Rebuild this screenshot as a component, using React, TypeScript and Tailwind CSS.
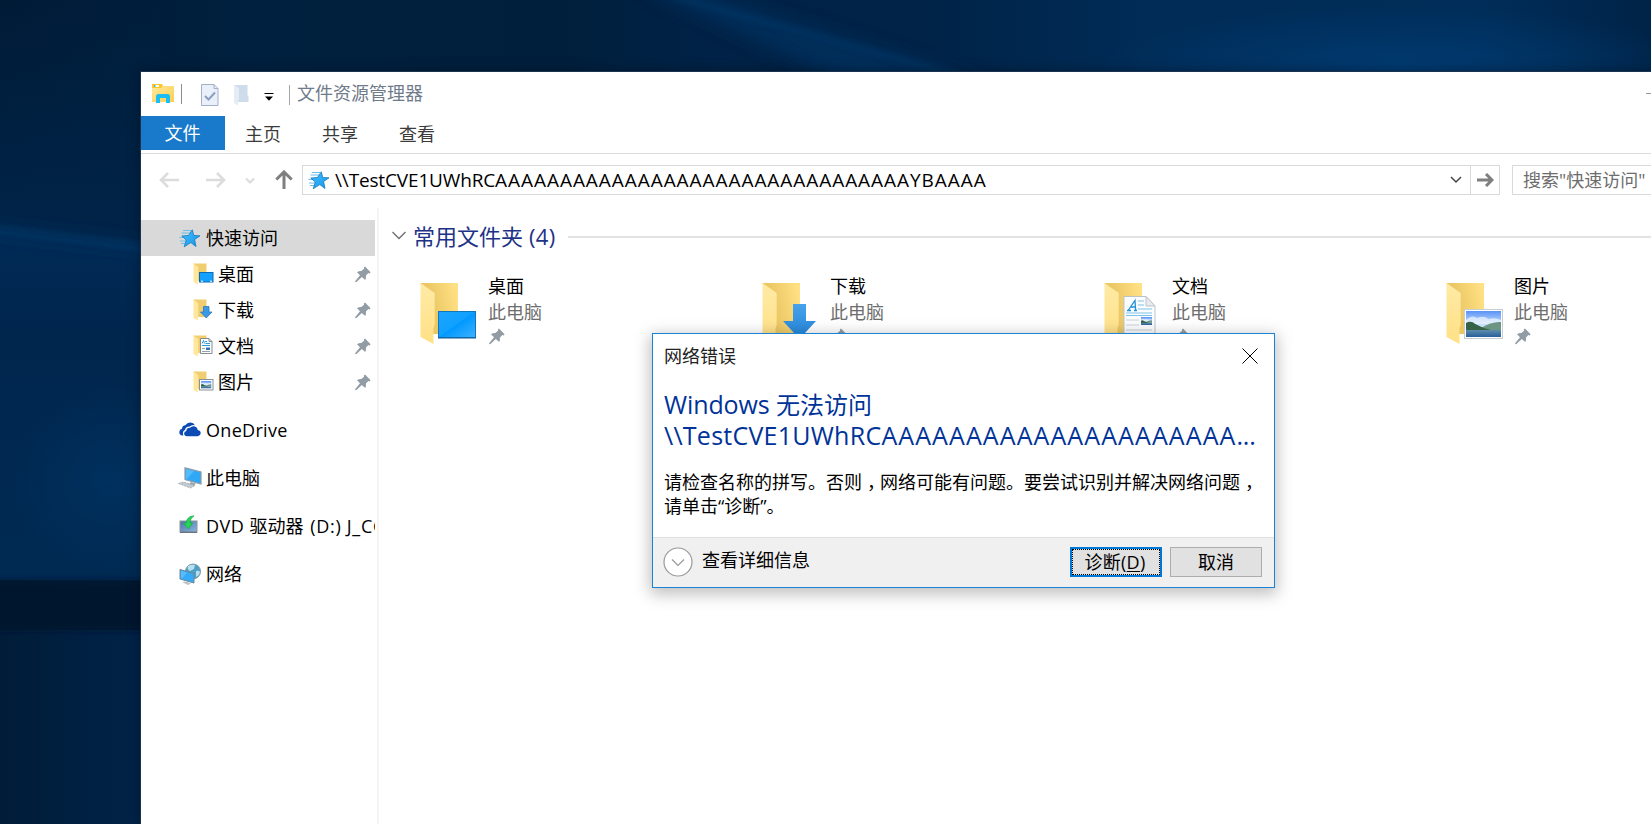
import type { ReactNode } from "react";

type Kind = "desktop" | "download" | "document" | "picture";

const FOLDERS: { name: string; kind: Kind }[] = [
  { name: "桌面", kind: "desktop" },
  { name: "下载", kind: "download" },
  { name: "文档", kind: "document" },
  { name: "图片", kind: "picture" },
];

function Wallpaper() {
  return (
    <svg className="absolute inset-0 h-full w-full" viewBox="0 0 1651 824" preserveAspectRatio="none">
      <defs>
        <linearGradient id="wTop" x1="0" x2="1" y1="0" y2="0">
          <stop offset="0" stopColor="#001b36" />
          <stop offset=".15" stopColor="#00203f" />
          <stop offset=".34" stopColor="#001f3c" />
          <stop offset=".42" stopColor="#002246" />
          <stop offset=".56" stopColor="#002347" />
          <stop offset=".7" stopColor="#002c57" />
          <stop offset=".9" stopColor="#002d59" />
          <stop offset="1" stopColor="#002347" />
        </linearGradient>
        <linearGradient id="wSide" x1="0" x2="0" y1="0" y2="1">
          <stop offset="0" stopColor="#002347" stopOpacity="0" />
          <stop offset=".8" stopColor="#002347" />
        </linearGradient>
        <linearGradient id="wLeft" x1="0" x2="0" y1="0" y2="1">
          <stop offset="0" stopColor="#002a55" />
          <stop offset=".3" stopColor="#00264e" />
          <stop offset="1" stopColor="#002a52" />
        </linearGradient>
        <linearGradient id="wLow" x1="0" x2="1" y1="0" y2="0">
          <stop offset="0" stopColor="#001c38" />
          <stop offset="1" stopColor="#00244a" />
        </linearGradient>
        <radialGradient id="wGlow">
          <stop offset="0" stopColor="#003a70" />
          <stop offset="1" stopColor="#003a70" stopOpacity="0" />
        </radialGradient>
        <filter id="wBlur" x="-20%" y="-20%" width="140%" height="140%">
          <feGaussianBlur stdDeviation="3" />
        </filter>
        <filter id="wBlurBig" x="-50%" y="-50%" width="200%" height="200%">
          <feGaussianBlur stdDeviation="9" />
        </filter>
      </defs>
      <rect width="1651" height="824" fill="url(#wTop)" />
      <ellipse cx="1400" cy="66" rx="300" ry="60" fill="url(#wGlow)" />
      <path d="M640 -14H680L990 84H850Z" fill="#003360" opacity=".75" filter="url(#wBlurBig)" />
      <path d="M672 -4L960 76" stroke="#003c70" strokeWidth="4" opacity=".6" filter="url(#wBlur)" />
      <rect width="160" height="260" fill="url(#wSide)" />
      <path d="M0 231L145 248V580H0Z" fill="url(#wLeft)" />
      <path d="M-20 227L165 249" stroke="#003869" strokeWidth="4" filter="url(#wBlurBig)" />
      <path d="M-20 227L165 249" stroke="#003869" strokeWidth="4" filter="url(#wBlur)" />
      <ellipse cx="110" cy="480" rx="100" ry="95" fill="url(#wGlow)" opacity=".45" />
      <rect y="630" width="160" height="194" fill="url(#wLow)" />
      <rect x="-10" y="581" width="170" height="49" fill="#00172f" filter="url(#wBlur)" />
    </svg>
  );
}

function FolderShape() {
  return (
    <>
      <defs>
        <linearGradient id="fBack" x1="0" x2="1" y1=".6" y2=".3">
          <stop offset=".3" stopColor="#ebc765" />
          <stop offset="1" stopColor="#ffe083" />
        </linearGradient>
        <linearGradient id="fFront" x1="0" x2="0" y1="0" y2="1">
          <stop offset="0" stopColor="#ffeaa6" />
          <stop offset="1" stopColor="#ffe085" />
        </linearGradient>
      </defs>
      <path d="M1.500 1H39V52H14Z" fill="url(#fBack)" />
      <path d="M1.500 1L15.700 11V43L14.500 46V62L1.500 55Z" fill="url(#fFront)" />
    </>
  );
}

function PhotoScene({ x, y, w, h }: { x: number; y: number; w: number; h: number }) {
  return (
    <svg x={x} y={y} width={w} height={h} viewBox="0 0 34 26" preserveAspectRatio="none">
      <defs>
        <linearGradient id="sky" x1="0" x2="0" y1="0" y2="1">
          <stop offset="0" stopColor="#5a93f5" />
          <stop offset=".6" stopColor="#d5ebff" />
        </linearGradient>
        <linearGradient id="sea" x1="0" x2="0" y1="0" y2="1">
          <stop offset="0" stopColor="#5f8dab" />
          <stop offset="1" stopColor="#285f9c" />
        </linearGradient>
      </defs>
      <rect width="34" height="26" fill="url(#sky)" />
      <path d="M0 9Q6 3 11 7Q17 4 22 8Q28 6 34 9V13H0Z" fill="#fff" opacity=".6" />
      <path d="M14 17Q26 10 34 11V19H14Z" fill="#6c9583" />
      <path d="M0 12Q5 9 9 13Q16 17 24 19V20H0Z" fill="#356347" />
      <rect y="19" width="34" height="7" fill="url(#sea)" />
    </svg>
  );
}

function BigFolder({ kind }: { kind: Kind }) {
  return (
    <svg width="60" height="64" viewBox="0 0 60 64" className="shrink-0">
      <defs>
        <linearGradient id="scr" x1="0" x2="1" y1="0" y2="1">
          <stop offset="0" stopColor="#1ba6ff" />
          <stop offset=".49" stopColor="#10a0ff" />
          <stop offset=".5" stopColor="#0098ff" />
          <stop offset="1" stopColor="#3fb2ff" />
        </linearGradient>
        <linearGradient id="arr" x1="0" x2="0" y1="0" y2="1">
          <stop offset="0" stopColor="#47a2ea" />
          <stop offset="1" stopColor="#2283d8" />
        </linearGradient>
      </defs>
      <FolderShape />
      {kind === "desktop" && (
        <>
          <rect x="19.500" y="29.500" width="37" height="26" fill="url(#scr)" stroke="#1376b8" />
          <path d="M19 56H57" stroke="#0e5c95" strokeWidth="1" />
        </>
      )}
      {kind === "download" && <path d="M32 22H45V39H55L38.500 57L22 39H32Z" fill="url(#arr)" />}
      {kind === "document" && (
        <>
          <path d="M21 14.500H43L52 24V62H21Z" fill="#fbfcfd" stroke="#bcc3c8" />
          <path d="M43 14.500V24H52Z" fill="#e8ecef" stroke="#bcc3c8" />
          <path d="M35 19H41M35 23H41M35 27H49M23 31H49M23 33.500H49" stroke="#7cc2ea" strokeWidth="1.200" />
          <path d="M23 38H36M23 43H36M23 48H49M23 53H49" stroke="#cbd2d6" strokeWidth="1.200" />
          <path d="M24 28.500H28M31 28.500H34M25.500 28L32 18.500L32.600 28M28 25H32.300" fill="none" stroke="#1f93d6" strokeWidth="1.300" />
          <PhotoScene x={38} y={35} w={11} h={8} />
        </>
      )}
      {kind === "picture" && (
        <>
          <rect x="19.500" y="27.500" width="38" height="29" fill="#fff" stroke="#c9ced3" />
          <PhotoScene x={21} y={29} w={35} h={26} />
        </>
      )}
    </svg>
  );
}

function SmallFolder({ kind }: { kind: Kind }) {
  return (
    <svg width="21" height="22" viewBox="0 0 21 22" className="shrink-0">
      <path d="M.5 .5H13.500V18H5Z" fill="#f0ce70" />
      <path d="M.5 .5L5.300 4V15.500L4.800 16.500V21.500L.5 19Z" fill="#ffe79b" />
      {kind === "desktop" && (
        <>
          <rect x="6.500" y="9.500" width="13.500" height="9.500" fill="#14a0ff" stroke="#0b6db2" />
          <path d="M8 18.200H10M17 18.200H19" stroke="#fff" />
        </>
      )}
      {kind === "download" && <path d="M10.500 7.500H16V13H19L13.300 19L7.500 13H10.500Z" fill="#3b9ae6" stroke="#2a79bd" strokeWidth=".8" />}
      {kind === "document" && (
        <>
          <path d="M7.500 3.500H16L19 6.500V18.500H7.500Z" fill="#fff" stroke="#858b90" />
          <path d="M16 3.500V6.500H19" fill="none" stroke="#858b90" />
          <path d="M12 6.500H14M12.500 8.500H17M9 10.500H17M9 8.500L10.500 5.500L11.500 8.500" fill="none" stroke="#2a9bdc" />
          <path d="M9 13.500H12M9 16.500H17" stroke="#9aa0a5" />
          <rect x="13" y="12.500" width="4" height="2.500" fill="#2e75b5" />
        </>
      )}
      {kind === "picture" && (
        <>
          <rect x="6.500" y="8.500" width="13.500" height="10.500" fill="#fff" stroke="#8c9296" />
          <PhotoScene x={8} y={10} w={10.5} h={7.5} />
        </>
      )}
    </svg>
  );
}

function Pin() {
  return (
    <svg width="16" height="17" viewBox="0 0 16 17" className="shrink-0" fill="#929ca4">
      <path d="M10 .5L15.600 6.300L14.600 7.400L13.300 7L10.800 9.800Q11.500 12.200 10.200 13.900L6.800 11L1.500 16L.2 16.300L.3 15L5 9.200L2 6.300Q4 4.800 6.300 5L9.100 2.800L8.900 1.600Z" />
    </svg>
  );
}

function StarIcon() {
  return (
    <svg width="22" height="19" viewBox="0 0 22 19" className="shrink-0">
      <defs>
        <linearGradient id="st" x1="0" x2="1" y1="0" y2="1">
          <stop offset="0" stopColor="#3fc0ff" />
          <stop offset="1" stopColor="#1a94ea" />
        </linearGradient>
      </defs>
      <path d="M4 1.500H12M2.500 4H11M.5 8.500H6M1 12H8M2 14.500H7" stroke="#6cbdea" strokeWidth="1" />
      <path d="M13.300 .8L14.700 6.500L21 6.800L15.600 10.500L17 17.500L11.800 13.600L5.200 17.800L7.300 11L2.800 7L9.500 6.500Z" fill="url(#st)" stroke="#1479bd" strokeWidth=".8" strokeLinejoin="round" />
    </svg>
  );
}

function OneDriveIcon() {
  return (
    <svg width="22" height="15" viewBox="0 0 22 15" className="-mt-0.5 shrink-0" fill="#0b4bb3">
      <path d="M4.300 13.500H3.500Q.3 13.200 .3 10Q.4 7.400 3 6.800Q3.200 3.500 6.300 3.300Q8.200 .3 11.500 .4Q14.700 .7 16 3.200Q12.600 2.600 10.600 4.600Q6.500 4.800 6 8.100Q3 9.500 4.300 13.500Z" />
      <path d="M8 14.300Q5 14 5.100 11.300Q5.500 9.200 7.300 9Q7.500 5.800 11 5.800Q12.800 4 15 4.300Q18.300 4.800 18.700 8Q21.700 8.500 21.700 11.300Q21.500 14 18.800 14.300Z" />
    </svg>
  );
}

function PcIcon() {
  return (
    <svg width="24" height="22" viewBox="0 0 24 22" className="-ml-px shrink-0">
      <path d="M7 .8L23 5V17L7 12.500Z" fill="#2fa8f7" stroke="#8b9ba7" strokeWidth="1.200" />
      <path d="M8 2L16 4L9 12L8 11.700Z" fill="#6cc6ff" opacity=".6" />
      <path d="M13 15L18 16.500L16 18.500L11 17Z" fill="#9aa6ae" />
      <path d="M.5 16.500L5 15L17 18.500L12.500 21Z" fill="#c3cacf" stroke="#9aa4ab" strokeWidth=".8" strokeDasharray="2 1" />
    </svg>
  );
}

function DvdIcon() {
  return (
    <svg width="19" height="18" viewBox="0 0 19 18" className="-mt-1 shrink-0">
      <defs>
        <linearGradient id="dv" x1="0" x2="1" y1="0" y2="1">
          <stop offset="0" stopColor="#4b76a8" />
          <stop offset="1" stopColor="#8ab4dd" />
        </linearGradient>
      </defs>
      <rect x="1" y="6" width="17" height="11" fill="url(#dv)" stroke="#8a949d" />
      <path d="M1 17.300H18" stroke="#555f68" />
      <path d="M15 .8Q8 1 7.200 8H4.500L9.500 14L13.500 8H11Q11 3.500 15 .8Z" fill="#25d558" stroke="#0fa23b" strokeWidth=".6" />
    </svg>
  );
}

function NetworkIcon() {
  return (
    <svg width="23" height="23" viewBox="0 0 23 23" className="shrink-0">
      <circle cx="14" cy="8.500" r="7.500" fill="#4f9fc4" stroke="#7f9aa8" />
      <path d="M9 3Q13 1 16 2L15 6L11 8Q8 7 9 3ZM17 8Q20 7 21 9Q20 13 17 14Z" fill="#b5e0ee" />
      <path d="M1 6.500L15 10.500V20L1 16Z" fill="#35aaf8" stroke="#6e8796" />
      <path d="M2 8L8 9.500L3 15.500L2 15Z" fill="#7dcdff" opacity=".5" />
      <path d="M3 19L7 18.500L12 20.500L9 22Z" fill="#b9c2c8" />
    </svg>
  );
}

function ExplorerIcon() {
  return (
    <svg width="22" height="20" viewBox="0 0 22 20" className="shrink-0">
      <defs>
        <linearGradient id="ex" x1="0" x2="1" y1="0" y2="1">
          <stop offset="0" stopColor="#ffe89c" />
          <stop offset="1" stopColor="#fbd04f" />
        </linearGradient>
      </defs>
      <path d="M0 0H10L11 2L10 4H0Z" fill="#fcc727" />
      <path d="M2 1H7V3H2Z" fill="#fff" />
      <path d="M2 1H3.500V3H2Z" fill="#3fb8d8" />
      <path d="M0 4H9L11 2H22V18H0Z" fill="url(#ex)" />
      <path d="M4 19V12.500Q4 10 6.500 10H15.500Q18 10 18 12.500V19H14V14H8V19Z" fill="#1bbdf5" />
    </svg>
  );
}

function SideRow({ icon, children, indent, pinned, selected }: { icon: ReactNode; children: ReactNode; indent?: boolean; pinned?: boolean; selected?: boolean }) {
  return (
    <div className={`flex h-9 w-[234px] items-center overflow-hidden ${indent ? "pl-[52px]" : "pl-[38px]"} ${selected ? "bg-[#d9d9d9]" : ""}`}>
      <span className={`flex shrink-0 items-center ${indent ? "w-[25px]" : "w-[27px]"}`}>{icon}</span>
      <span className="whitespace-nowrap">{children}</span>
      {pinned && (
        <span className="mr-1 ml-auto">
          <Pin />
        </span>
      )}
    </div>
  );
}

function Comma() {
  return <span className="pl-[5px] tracking-[-5px]">，</span>;
}

function NetworkErrorDialog() {
  return (
    <div className="absolute top-[333px] left-[652px] flex h-[255px] w-[623px] flex-col border border-[#1883d7] bg-white text-black shadow-[0_4px_15px_2px_rgba(0,0,0,0.26)]">
      <div className="flex h-[43px] items-center justify-between pr-4 pl-[11px] text-[#222]">
        <span>网络错误</span>
        <svg width="16" height="16" viewBox="0 0 16 16" stroke="#000" strokeWidth="1">
          <path d="M.5 .5L15.500 15.500M15.500 .5L.5 15.500" />
        </svg>
      </div>
      <div className="flex grow flex-col pt-3 pl-[11px]">
        <div className="text-[24px] leading-[31px] whitespace-nowrap text-[#003399]">
          <div>
            <span className="text-[25px] leading-[30px] tracking-[-0.1px]">Windows </span>无法访问
          </div>
          <div className="text-[25px]">
            <span className="tracking-[0.25px]">\\TestCVE1UWhRC</span>
            <span className="tracking-[1.100px]">AAAAAAAAAAAAAAAAAAAAA</span>
            <span className="tracking-[-0.2px]">...</span>
          </div>
        </div>
        <div className="pt-[19px] leading-6 whitespace-nowrap">
          <div>
            请检查名称的拼写。否则
            <Comma />
            网络可能有问题。要尝试识别并解决网络问题
            <Comma />
          </div>
          <div>请单击“诊断”。</div>
        </div>
      </div>
      <div className="flex h-[50px] shrink-0 items-center border-t border-[#dfdfdf] bg-[#f0f0f0] pr-3 pb-0.5 pl-[10px]">
        <svg width="30" height="30" viewBox="0 0 30 30" fill="none">
          <circle cx="15" cy="15" r="14" fill="#fff" stroke="#999" strokeWidth="1.200" />
          <path d="M9 12.500L15 18.500L21 12.500" stroke="#999" strokeWidth="1.200" />
        </svg>
        <span className="-mt-1 grow pl-[9px]">查看详细信息</span>
        <div className="flex gap-2">
          <button className="h-[30px] w-[92px] border-2 border-[#0078d7] bg-[#e1e1e1]">
            <span className="flex h-full items-center justify-center border border-dotted border-black pr-0.5 tracking-[0.3px]">
              诊断(<span className="underline underline-offset-2">D</span>)
            </span>
          </button>
          <button className="flex h-[30px] w-[92px] items-center justify-center border border-[#adadad] bg-[#e1e1e1]">取消</button>
        </div>
      </div>
    </div>
  );
}

export default function App() {
  return (
    <div className="relative h-[824px] w-[1651px] overflow-hidden bg-[#00203f] pt-[72px] pl-[141px] font-['Open_Sans','Noto_Sans_CJK_SC',sans-serif] text-[18px] leading-6 text-black">
      <Wallpaper />
      <div className="relative flex h-[752px] w-[1600px] flex-col bg-white shadow-[0_0_0_1px_#1b3350,0_0_12px_rgba(0,0,0,0.4)]">
        <div className="flex h-11 w-[1510px] items-center pl-[11px]">
          <ExplorerIcon />
          <span className="ml-[7px] h-5 w-px bg-[#8c8c8c]" />
          <svg width="18" height="22" viewBox="0 0 18 22" className="mt-0.5 ml-[19px]" fill="none">
            <path d="M.5 .5H13L17 4.500V21.500H.5Z" fill="#e9f0fa" stroke="#a3b0c8" />
            <path d="M13 .5V4.500H17" stroke="#a3b0c8" />
            <path d="M4 12L7.500 15.500L14 8.500" stroke="#8d9fc0" strokeWidth="2" />
          </svg>
          <svg width="15" height="22" viewBox="0 0 15 22" className="mt-0.5 ml-[15px]">
            <path d="M0 1H13.500V11.500H14.500V18H4Z" fill="#cfdcec" />
            <path d="M0 1L5 4V15L4 17V21.500L0 19Z" fill="#e4ecf6" />
          </svg>
          <svg width="10" height="10" viewBox="0 0 10 10" className="mt-1.5 ml-[15px]">
            <path d="M.5 1.500H9.500" stroke="#000" />
            <path d="M1 4.500H9L5 8.700Z" />
          </svg>
          <span className="mt-0.5 ml-[15px] h-5 w-px bg-[#a5a5a5]" />
          <span className="-mt-0.5 ml-[7px] text-[#6f7b8a]">文件资源管理器</span>
        </div>
        <div className="flex h-[38px] border-b border-[#dadbdc] text-[#3b3b3b]">
          <div className="flex h-[34px] w-[84px] items-center justify-center bg-[#1979ca] pr-px text-white">文件</div>
          <div className="flex h-9 items-center gap-[41px] pl-[20px]">
            <span>主页</span>
            <span>共享</span>
            <span>查看</span>
          </div>
        </div>
        <div className="flex h-[53px] items-center pb-px pl-[18px]">
          <svg width="20" height="16" viewBox="0 0 20 16" fill="none" stroke="#dcdcdc" strokeWidth="2.600">
            <path d="M2 8H20M9 1L2 8L9 15" />
          </svg>
          <svg width="20" height="16" viewBox="0 0 20 16" fill="none" stroke="#dcdcdc" strokeWidth="2.600" className="ml-[27px]">
            <path d="M0 8H18M11 1L18 8L11 15" />
          </svg>
          <svg width="10" height="8" viewBox="0 0 10 8" fill="none" stroke="#dcdcdc" strokeWidth="2.200" className="mt-0.5 ml-[19px]">
            <path d="M1 1.500L5 5.500L9 1.500" />
          </svg>
          <svg width="18" height="19" viewBox="0 0 18 19" fill="none" stroke="#7f7f7f" strokeWidth="3" className="-mt-0.5 ml-[20px]">
            <path d="M9 19V2M1.300 9.500L9 2L16.700 9.500" />
          </svg>
          <div className="ml-[9px] flex h-[30px] w-[1198px] items-center border border-[#d9d9d9]">
            <span className="pl-[5px]">
              <StarIcon />
            </span>
            <span className="grow pl-[5px] text-[19px] whitespace-nowrap">
              <span className="tracking-[-0.150px]">\\TestCVE1UWhRC</span>
              <span className="tracking-[0.950px]">AAAAAAAAAAAAAAAAAAAAAAAAAAAAAAAAYBAAAA</span>
            </span>
            <svg width="12" height="8" viewBox="0 0 12 8" fill="none" stroke="#444" strokeWidth="1.500" className="mr-[8px]">
              <path d="M1 1L6 6L11 1" />
            </svg>
            <span className="flex h-full w-[29px] items-center justify-center border-l border-[#d9d9d9] pl-px">
              <svg width="17" height="14" viewBox="0 0 17 14" fill="none" stroke="#7f7f7f" strokeWidth="3">
                <path d="M0 7H15M9 1L15 7L9 13" />
              </svg>
            </span>
          </div>
          <div className="ml-[12px] flex h-[30px] w-[200px] items-center border border-[#d9d9d9] pl-[10px] whitespace-nowrap text-[#6d6d6d]">搜索"快速访问"</div>
        </div>
        <div className="flex grow">
          <div className="flex w-[236px] shrink-0 flex-col pt-[13px]">
            <SideRow icon={<StarIcon />} selected>
              快速访问
            </SideRow>
            {FOLDERS.map((f) => (
              <SideRow key={f.name} icon={<SmallFolder kind={f.kind} />} indent pinned>
                {f.name}
              </SideRow>
            ))}
            <div className="flex flex-col gap-3 pt-3">
              <SideRow icon={<OneDriveIcon />}>
                <span className="tracking-[0.3px]">OneDrive</span>
              </SideRow>
              <SideRow icon={<PcIcon />}>此电脑</SideRow>
              <SideRow icon={<DvdIcon />}>
                <span className="tracking-[0.5px]">DVD </span>驱动器 <span className="pl-0.5 tracking-[0.7px]">(D:) J_CCSA</span>
              </SideRow>
              <SideRow icon={<NetworkIcon />}>网络</SideRow>
            </div>
          </div>
          <div className="mt-px w-[2px] shrink-0 bg-[#f5f5f5]" />
          <div className="flex grow flex-col pt-[13px] pl-[13px]">
            <div className="flex h-9 items-center">
              <svg width="14" height="9" viewBox="0 0 14 9" fill="none" stroke="#6d6d6d" strokeWidth="1.300" className="-mt-1.5">
                <path d="M.5 1L7 7.500L13.500 1" />
              </svg>
              <span className="-mt-[5px] pl-[7px] text-[22px] whitespace-nowrap text-[#1e3287]">
                常用文件夹<span className="tracking-[0.3px]"> (4)</span>
              </span>
              <span className="-mt-0.5 ml-[12px] h-0.5 grow bg-[#e2e2e2]" />
            </div>
            <div className="flex pt-[26px] pl-[27px]">
              {FOLDERS.map((f) => (
                <div key={f.name} className="flex w-[342px] shrink-0">
                  <BigFolder kind={f.kind} />
                  <div className="-mt-[9px] flex flex-col pl-[9px] leading-[26px]">
                    <span>{f.name}</span>
                    <span className="text-[#6d6d6d]">此电脑</span>
                    <span className="pt-[3px] pl-px">
                      <Pin />
                    </span>
                  </div>
                </div>
              ))}
            </div>
          </div>
        </div>
      </div>
      <span className="absolute top-[93px] left-[1646px] h-px w-3 bg-[#999]" />
      <NetworkErrorDialog />
    </div>
  );
}
